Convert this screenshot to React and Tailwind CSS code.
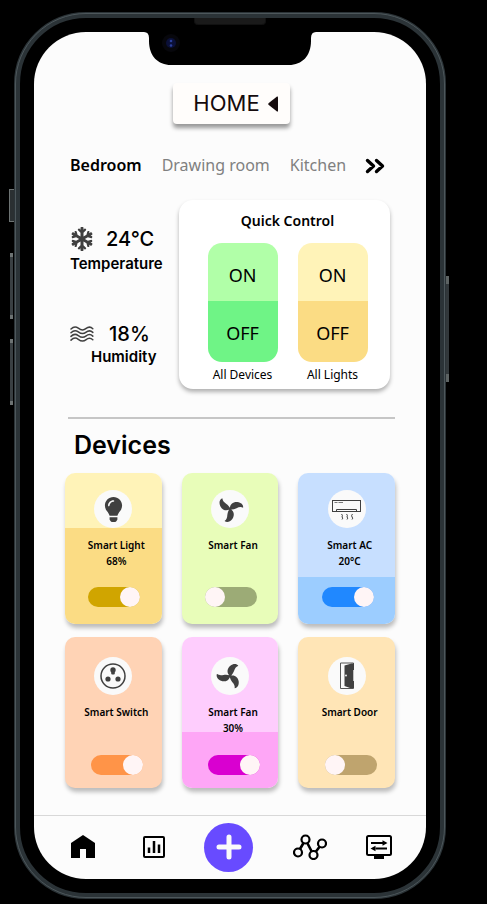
import React from "react";
import { FaLightbulb, FaSnowflake } from "react-icons/fa";

const inter = "font-[Inter,'Liberation_Sans',sans-serif]";
const noto = "font-['Noto_Sans','Open_Sans',sans-serif]";

function FanIcon({ className }) {
  const blade = "M0 -0.500 C-0.500 -5.500 4 -8.500 8.500 -8 C12.500 -7.500 15.500 -5 15 -1.500 C12 -2.800 10 -2 7.500 -0.800 C5 0.300 2.500 0.800 0.500 0.500 Z";
  return (
    <svg viewBox="-16 -16 32 32" className={className} fill="currentColor" aria-hidden="true">
      <path d={blade} />
      <path d={blade} transform="rotate(120)" />
      <path d={blade} transform="rotate(240)" />
      <circle r="1.800" />
    </svg>
  );
}

function AcIcon() {
  return (
    <svg viewBox="0 0 30 22" className="mt-[2px] w-[30px] h-[22px]" fill="none" stroke="#404040" aria-hidden="true">
      <rect x="0.500" y="1.500" width="28" height="11" />
      <path d="M2.500 3.500 H5.500 M6.500 3.500 H11" strokeWidth="0.700" />
      <path d="M4.500 12 V10.500 H24.500 V12" />
      <path d="M9.500 15 q1.500 1.200 0.500 3 q1.500 1 0 2.500 M14.500 15 q1.500 1.200 0.500 3 q1.500 1 0 2.500 M20.500 15 q-1.500 1.200 -0.500 3 q1.500 1 0 2.500" />
    </svg>
  );
}

function SocketIcon() {
  return (
    <svg viewBox="0 0 26 26" className="size-[26px]" fill="#404040" aria-hidden="true">
      <circle cx="13" cy="13" r="12" fill="none" stroke="#404040" strokeWidth="1.500" />
      <circle cx="13" cy="7" r="2.700" />
      <rect x="11.200" y="7" width="3.600" height="4.500" rx="1" />
      <circle cx="8" cy="16" r="2.600" />
      <circle cx="18" cy="16" r="2.600" />
    </svg>
  );
}

function DoorIcon() {
  return (
    <svg viewBox="0 0 16 28" className="w-[16px] h-[28px]" aria-hidden="true">
      <path d="M1.500 1 H14.500 V26.500 H1.500 Z" fill="none" stroke="#555" />
      <path d="M5.500 3.500 L12.500 1.500 H15 V26 H11 L5.500 24 Z" fill="#404040" />
      <circle cx="7" cy="13.500" r="0.900" fill="#fafafa" />
      <path d="M14.800 8 V19" stroke="#fafafa" strokeWidth="1" />
    </svg>
  );
}

function WavesIcon() {
  const wave = "c2.500 -2.500 5 -2.500 7.300 -0.800 s5 2.500 7.500 0.500 s5 -2 7 0";
  return (
    <svg viewBox="0 0 24 16" className="w-[24px] h-[16px]" fill="none" stroke="#404040" strokeWidth="1.500" strokeLinecap="round" aria-hidden="true">
      <path d={"M1 3" + wave} />
      <path d={"M1 6.700" + wave} />
      <path d={"M1 10.400" + wave} />
      <path d={"M1 14.100" + wave} />
    </svg>
  );
}

const upper = { pad: "pt-[17px] pb-[17px]", shift: "ml-[2px]" };
const lower = { pad: "pt-[20px] pb-[13px]", shift: "ml-[8px]" };

const devices = [
  { name: "Smart Light", value: "68%", on: true, row: upper, bg: "bg-[linear-gradient(to_bottom,#fff3b8_55px,#fbdc84_55px)]", track: "bg-[#d0a500]", icon: <FaLightbulb className="size-[25px]" /> },
  { name: "Smart Fan", on: false, row: upper, bg: "bg-[#e8fdb9]", track: "bg-[#9cab76]", icon: <FanIcon className="size-[28px]" /> },
  { name: "Smart AC", value: "20°C", on: true, row: upper, bg: "bg-[linear-gradient(to_bottom,#c7dfff_104px,#9ccdff_104px)]", track: "bg-[#2088ff]", icon: <AcIcon /> },
  { name: "Smart Switch", on: true, row: lower, bg: "bg-[#ffd3b5]", track: "bg-[#ff9448]", icon: <SocketIcon /> },
  { name: "Smart Fan", value: "30%", on: true, row: lower, bg: "bg-[linear-gradient(to_bottom,#fecdfd_95px,#fea6f6_95px)]", track: "bg-[#d900d0]", icon: <FanIcon className="size-[28px] -rotate-[45deg]" /> },
  { name: "Smart Door", on: false, row: lower, bg: "bg-[#ffe5b6]", track: "bg-[#bfa46e]", icon: <DoorIcon /> },
];

function DeviceCard({ device, index }) {
  const id = "device-" + index;
  return (
    <li className={"flex h-[151px] flex-col items-center rounded-[10px] shadow-[1px_4px_4px_rgba(0,0,0,0.25)] " + device.row.pad + " " + device.bg}>
      <span className="flex size-[38px] shrink-0 items-center justify-center rounded-full bg-[#fafafa] text-[#404040]">{device.icon}</span>
      <label htmlFor={id} className={"mt-[9px] flex flex-col items-center pl-[6px] text-[10px] leading-[16px] font-semibold text-black " + noto}>
        <span className="whitespace-nowrap">{device.name}</span>
        {device.value && <span>{device.value}</span>}
      </label>
      <input
        id={id}
        type="checkbox"
        defaultChecked={device.on}
        className={"mt-auto h-[20px] w-[52px] shrink-0 cursor-pointer appearance-none rounded-full before:block before:size-[20px] before:rounded-full before:bg-[#fff5f6] checked:before:ml-auto " + device.row.shift + " " + device.track}
      />
    </li>
  );
}

function QuickSwitch({ label, on, off }) {
  return (
    <div role="group" aria-label={label} className="flex w-[70px] flex-col items-center">
      <div className="w-full overflow-hidden rounded-[14px]">
        <button type="button" className={"block h-[58px] w-full pt-[7px] text-[18px] " + on}>ON</button>
        <button type="button" className={"block h-[61px] w-full pt-[4px] text-[18px] " + off}>OFF</button>
      </div>
      <span className="mt-[4px] text-[12px] leading-[18px] whitespace-nowrap">{label}</span>
    </div>
  );
}

function SideButtons() {
  return (
    <>
      <span className="absolute top-[171px] -left-[11px] h-[33px] w-[5px] border border-r-0 border-[#6d7373] bg-[#2b3032]" />
      <span className="absolute top-[235px] -left-[10px] h-[66px] w-[3px] border-y-4 border-[#6d7373] bg-[#3a4043]" />
      <span className="absolute top-[321px] -left-[10px] h-[66px] w-[3px] border-y-4 border-[#6d7373] bg-[#3a4043]" />
      <span className="absolute top-[258px] -right-[9px] h-[106px] w-[3px] border-y-8 border-[#5d6363] bg-[#32383b]" />
    </>
  );
}

export default function App() {
  return (
    <div className="min-h-screen bg-black pt-[12px] pr-[41px] pb-[5px] pl-[14px]">
      <div className="relative rounded-[72px] border-[6px] border-[#2b3337] bg-black p-[14px] outline-1 -outline-offset-2 outline-[#4d575b]">
        <SideButtons />
        <span className="absolute top-0 left-1/2 h-[7px] w-[72px] -translate-x-1/2 rounded-b-[4px] border border-t-0 border-[#111] bg-[#1a1a1a]" />
        <main className={"overflow-hidden rounded-[52px] bg-[#fcfcfc] text-black " + noto}>
          <svg viewBox="0 0 172 33" className="mx-auto h-[33px] w-[172px]" aria-hidden="true">
            <path d="M0 0 H172 Q167 0 167 6 V9 C167 24 158 33 145 33 H27 C14 33 5 24 5 9 V6 Q5 0 0 0 Z" fill="#000" />
            <circle cx="27" cy="11" r="9" fill="#07070c" />
            <circle cx="27" cy="11" r="5" fill="#0b1038" />
            <circle cx="27" cy="9" r="1.300" fill="#2a3f9c" />
            <circle cx="27" cy="13.500" r="1.300" fill="#2a3f9c" />
          </svg>

          <header className="flex justify-center pt-[18px] pl-[3px]">
            <button type="button" className={"flex h-[41px] items-center gap-[8px] rounded-[4px] bg-[#fffdfb] pr-[12px] pl-[20px] text-[22px] text-[#150b0d] shadow-[0_4px_4px_rgba(0,0,0,0.4)] " + inter}>
              HOME
              <svg viewBox="0 0 10 16" className="h-[16px] w-[10px]" fill="currentColor" aria-hidden="true">
                <path d="M9 0.500 Q10 0 10 1.500 V14.500 Q10 16 9 15.500 L0.500 8.700 Q0 8 0.500 7.300 Z" />
              </svg>
            </button>
          </header>

          <nav aria-label="Rooms" className="mt-[29px] flex items-center pr-[41px] pl-[36px] text-[16px] leading-[24px]">
            <a href="#bedroom" className="font-semibold">Bedroom</a>
            <a href="#drawing-room" className="ml-[20px] whitespace-nowrap text-[#808080]">Drawing room</a>
            <a href="#kitchen" className="ml-[20px] text-[#808080]">Kitchen</a>
            <button type="button" aria-label="More rooms" className="mt-[2px] ml-auto">
              <svg viewBox="0 0 20 16" className="h-[16px] w-[20px]" fill="none" stroke="#000" strokeWidth="3.400" strokeLinecap="round" strokeLinejoin="round" aria-hidden="true">
                <path d="M2.500 2.500 L8.500 8 L2.500 13.500 M11.500 2.500 L17.500 8 L11.500 13.500" />
              </svg>
            </button>
          </nav>

          <section className="mt-[23px] flex justify-between px-[36px]">
            <dl className={"flex flex-col pt-[26px] " + inter}>
              <div className="flex flex-col">
                <dd className="flex items-center gap-[12px] text-[20px] leading-[26px] font-medium">
                  <FaSnowflake className="size-[24px] text-[#404040]" />24°C
                </dd>
                <dt className="order-last text-[15px] leading-[24px] font-semibold">Temperature</dt>
              </div>
              <div className="mt-[45px] flex flex-col">
                <dd className="flex items-center gap-[15px] text-[20px] leading-[26px] font-medium">
                  <WavesIcon />18%
                </dd>
                <dt className="order-last pl-[21px] text-[15px] leading-[20px] font-semibold">Humidity</dt>
              </div>
            </dl>
            <div className="h-[189px] w-[211px] rounded-[14px] bg-white pt-[9px] shadow-[0_3px_4px_rgba(0,0,0,0.3)]">
              <h2 className="pl-[6px] text-center text-[14px] leading-[24px] font-semibold">Quick Control</h2>
              <div className="mt-[10px] flex justify-center gap-[20px] pl-[6px]">
                <QuickSwitch label="All Devices" on="bg-[#b1ffa8]" off="bg-[#6ff486]" />
                <QuickSwitch label="All Lights" on="bg-[#fff3b8]" off="bg-[#fbdc84]" />
              </div>
            </div>
          </section>

          <hr className="mt-[28px] mr-[31px] ml-[34px] border-t-2 border-[#c6c6c6]" />

          <section>
            <h2 className={"mt-[9px] pl-[40px] text-[25px] leading-[34px] font-semibold " + inter}>Devices</h2>
            <ul className="mt-[11px] grid grid-cols-3 gap-x-[20px] gap-y-[13px] px-[31px]">
              {devices.map((device, i) => (
                <DeviceCard key={i} device={device} index={i} />
              ))}
            </ul>
          </section>

          <nav aria-label="Main" className="mt-[27px] flex h-[64px] items-center justify-between border-t border-[#d8d8d8] pb-px pr-[34px] pl-[35px]">
            <a href="#home" aria-label="Home" className="w-[34px]">
              <svg viewBox="0 0 28 28" className="size-[28px]" aria-hidden="true">
                <path d="M14 2 L26 10 V25 H17 V16 H11 V25 H2 V10 Z" />
              </svg>
            </a>
            <a href="#statistics" aria-label="Statistics">
              <svg viewBox="0 0 22 22" className="size-[22px]" fill="none" stroke="#000" strokeWidth="2" aria-hidden="true">
                <rect x="1" y="1" width="20" height="20" rx="1" />
                <path d="M6 17 V11.500 M11 17 V5 M16 17 V8.500" strokeWidth="2.500" />
              </svg>
            </a>
            <button type="button" aria-label="Add device" className="flex size-[49px] items-center justify-center rounded-full bg-[#684bff]">
              <svg viewBox="0 0 28 28" className="size-[28px]" stroke="#fafafa" strokeWidth="5" strokeLinecap="round" aria-hidden="true">
                <path d="M14 4 V24 M4 14 H24" />
              </svg>
            </button>
            <a href="#automation" aria-label="Automation">
              <svg viewBox="0 0 34 26" className="h-[26px] w-[34px]" fill="none" stroke="#000" strokeWidth="2.200" aria-hidden="true">
                <circle cx="5" cy="18.500" r="4" />
                <circle cx="12.500" cy="5.500" r="4" />
                <circle cx="20.500" cy="21" r="4" />
                <circle cx="29" cy="9.500" r="4" />
                <path d="M7 15 L10.500 9 M14.300 9 L18.700 17.500 M22.800 17.700 L26.600 12.700" strokeWidth="2.600" />
              </svg>
            </a>
            <a href="#display" aria-label="Display settings">
              <svg viewBox="0 0 26 24" className="h-[24px] w-[26px]" fill="none" stroke="#000" strokeWidth="2" aria-hidden="true">
                <rect x="1" y="1" width="24" height="19" rx="1.500" />
                <path d="M8 22.500 H18" strokeWidth="3" />
                <path d="M5 8 H17 M9.500 13.500 H21" strokeWidth="1.800" />
                <path d="M16.500 5.300 L21.500 8 L16.500 10.700 Z M9.500 10.800 L4.500 13.500 L9.500 16.200 Z" fill="#000" stroke="none" />
              </svg>
            </a>
          </nav>
        </main>
      </div>
    </div>
  );
}
